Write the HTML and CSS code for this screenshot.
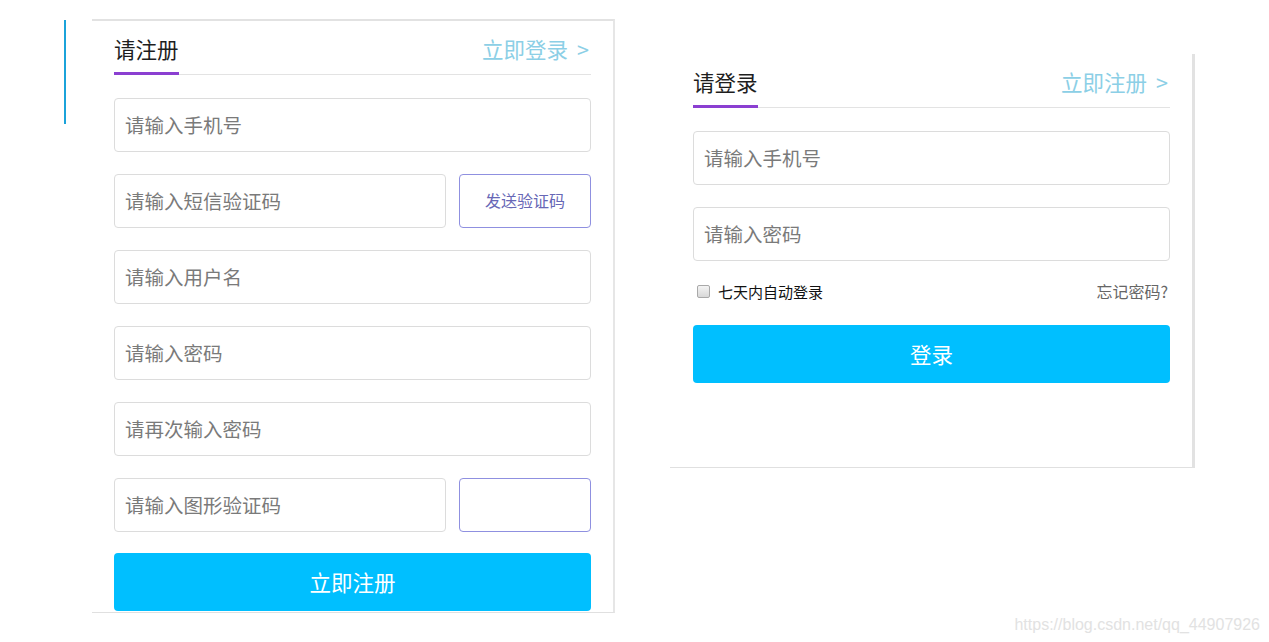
FILE: index.html
```html
<!DOCTYPE html>
<html lang="zh-CN">

<head>
    <meta charset="UTF-8">
    <meta name="viewport" content="width=device-width, initial-scale=1.0">
    <title>注册 / 登录</title>
    <link rel="stylesheet" href="styles.css">
</head>

<body>
    <div class="side-bar"></div>

    <!-- 注册 -->
    <div class="panel reg">
        <div class="panel-head">
            <span class="panel-title">请注册</span>
            <a class="panel-link" href="#">立即登录<span class="arrow">&gt;</span></a>
        </div>
        <div class="form">
            <input class="field" type="text" placeholder="请输入手机号">
            <div class="row">
                <input class="field short" type="text" placeholder="请输入短信验证码">
                <button class="code-btn" type="button">发送验证码</button>
            </div>
            <input class="field" type="text" placeholder="请输入用户名">
            <input class="field" type="password" placeholder="请输入密码">
            <input class="field" type="password" placeholder="请再次输入密码">
            <div class="row">
                <input class="field short" type="text" placeholder="请输入图形验证码">
                <div class="captcha"></div>
            </div>
            <button class="submit" type="button">立即注册</button>
        </div>
    </div>

    <!-- 登录 -->
    <div class="panel login">
        <div class="panel-head">
            <span class="panel-title">请登录</span>
            <a class="panel-link" href="#">立即注册<span class="arrow">&gt;</span></a>
        </div>
        <div class="form">
            <input class="field" type="text" placeholder="请输入手机号">
            <input class="field" type="password" placeholder="请输入密码">
            <div class="remember">
                <label><input type="checkbox"><span>七天内自动登录</span></label>
                <a href="#" class="forget">忘记密码?</a>
            </div>
            <button class="submit" type="button">登录</button>
        </div>
    </div>

    <div class="watermark">https://blog.csdn.net/qq_44907926</div>
</body>

</html>
```

FILE: styles.css
```css
* {
    box-sizing: border-box;
}

body {
    margin: 0;
    padding-left: 64px;
    display: flex;
    align-items: flex-start;
    font-family: "Noto Sans CJK SC", "Noto Sans", sans-serif;
    background: #fff;
    position: relative;
    height: 642px;
    overflow: hidden;
}

.side-bar {
    width: 2px;
    height: 104px;
    margin-top: 20px;
    background: #1ba3da;
}

.panel {
    background: #fff;
}

.panel.reg {
    width: 523px;
    margin-top: 19px;
    margin-left: 26px;
    padding: 0 22px 1px 22px;
    border-top: 2px solid #e2e2e2;
    border-right: 2px solid #e6e6e6;
    border-bottom: 1px solid #e0e0e0;
}

.panel.login {
    width: 525px;
    margin-top: 54px;
    margin-left: 55px;
    padding: 0 22px 84px 23px;
    border-right: 3px solid #e2e2e2;
    border-bottom: 1px solid #e0e0e0;
}

.panel-head {
    display: flex;
    justify-content: space-between;
    align-items: flex-end;
    padding-top: 12px;
    border-bottom: 1px solid #e3e3e3;
}

.panel-title {
    font-size: 21.5px;
    line-height: 32px;
    color: #1e1e1e;
    padding-bottom: 7px;
    border-bottom: 3px solid #8b3fd1;
    margin-bottom: -1px;
}

.panel-link {
    font-size: 21.5px;
    line-height: 32px;
    padding-bottom: 9px;
    padding-right: 2px;
    color: #8ccfe6;
    text-decoration: none;
}

.panel-link .arrow {
    margin-left: 9px;
}

.form {
    display: flex;
    flex-direction: column;
    gap: 22px;
    padding-top: 23px;
}

.field {
    display: block;
    width: 100%;
    height: 54px;
    padding: 0 10px 2px 10px;
    border: 1px solid #dcdcdc;
    border-radius: 4px;
    font-family: inherit;
    font-size: 19.5px;
    color: #333;
    outline: none;
}

.field::placeholder {
    color: #7a7a7a;
}

.row {
    display: flex;
    justify-content: space-between;
}

.field.short {
    width: 332px;
}

.code-btn,
.captcha {
    width: 132px;
    height: 54px;
    border: 1px solid #8f90e0;
    border-radius: 4px;
    background: #fff;
}

.code-btn {
    font-family: inherit;
    font-size: 16px;
    color: #6767b6;
    padding: 0 0 2px 0;
}

.submit {
    height: 58px;
    margin-top: -1px;
    padding-bottom: 2px;
    border: none;
    border-radius: 4px;
    background: #00bfff;
    color: #fff;
    font-family: inherit;
    font-size: 21.5px;
}

.remember {
    display: flex;
    justify-content: space-between;
    align-items: center;
    height: 24px;
    margin: -4px 0 1px 0;
}

.remember label {
    display: flex;
    align-items: center;
    font-size: 15px;
    color: #111;
}

.remember input {
    appearance: none;
    width: 13px;
    height: 13px;
    margin: 0 3px 0 4px;
    border: 1px solid #a9a9a9;
    border-radius: 2px;
    background: linear-gradient(#f4f4f4, #d8d8d8);
}

.remember span {
    margin-left: 5px;
}

.forget {
    font-size: 16px;
    color: #666;
    text-decoration: none;
    padding-right: 2px;
}

.watermark {
    position: absolute;
    right: 9px;
    bottom: 8px;
    font-family: "Liberation Sans", Arial, sans-serif;
    font-size: 16px;
    color: #e2e2e2;
}
```
